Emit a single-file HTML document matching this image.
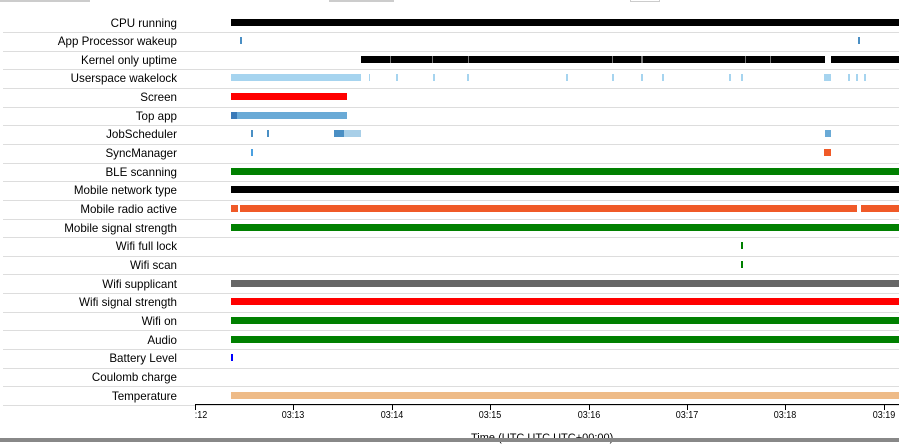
<!DOCTYPE html><html><head><style>
body{margin:0;width:899px;height:442px;overflow:hidden;background:#fff;font-family:"Liberation Sans",Arial,sans-serif;position:relative}
.l{position:absolute;right:722px;font-size:11.6px;color:#000;line-height:13px;white-space:nowrap}
.s{position:absolute;left:3px;width:896px;height:1px;background:#ddd}
.b{position:absolute;height:7px}
.t{position:absolute;font-size:10px;color:#000;transform:translateX(-50%) scaleX(0.9)}
.k{position:absolute;top:405px;width:1px;height:5px;background:#000}
</style></head><body>
<div style="position:absolute;left:0;top:0;width:90px;height:2px;background:#ccc"></div>
<div style="position:absolute;left:329px;top:0;width:65px;height:2px;background:#ccc"></div>
<div style="position:absolute;left:630px;top:0;width:30px;height:2px;border:1px solid #ccc;border-top:none;box-sizing:border-box"></div>
<div id="c"></div>
<script>
var labels=["CPU running","App Processor wakeup","Kernel only uptime","Userspace wakelock","Screen","Top app","JobScheduler","SyncManager","BLE scanning","Mobile network type","Mobile radio active","Mobile signal strength","Wifi full lock","Wifi scan","Wifi supplicant","Wifi signal strength","Wifi on","Audio","Battery Level","Coulomb charge","Temperature"];
var K="#000",LB="#a6d4ef",B="#4a8fc4",G="#008000",O="#f05a28";
var bars={0:[[231,899,K]],1:[[240,242,B],[858,860,B]],2:[[361,825,K],[831,899,K]],
3:[[231,361,LB],[369,370,LB],[396,398,LB],[433,435,LB],[467,469,LB],[566,568,LB],[612,614,LB],[641,643,LB],[662,664,LB],[729,731,LB],[741,743,LB],[824,831,LB],[848,850,LB],[856,858,LB],[864,866,LB]],
4:[[231,347,"#f00"]],5:[[231,347,"#6aaad6"],[231,237,"#3a7ab8"]],
6:[[251,253,B],[267,269,B],[334,361,"#a8cfe8"],[334,344,"#4a8fc4"],[825,831,"#6aaad6"]],
7:[[251,253,"#4aa0e0"],[824,831,O]],8:[[231,899,G]],9:[[231,899,K]],
10:[[231,238,O],[240,857,O],[861,899,O]],11:[[231,899,G]],12:[[741,743,G]],13:[[741,743,G]],
14:[[231,899,"#666"]],15:[[231,899,"#f00"]],16:[[231,899,G]],17:[[231,899,G]],18:[[231,233,"#00f"]],20:[[231,899,"#eebb88"]]};
var h="";
labels.forEach(function(t,i){var cy=22+i*18.65;
h+='<div class="l" style="top:'+(cy-5.5)+'px">'+t+'</div>';
h+='<div class="s" style="top:'+Math.round(cy+10)+'px"></div>';
(bars[i]||[]).forEach(function(b){h+='<div class="b" style="left:'+b[0]+'px;width:'+(b[1]-b[0])+'px;top:'+(cy-3.5)+'px;background:'+b[2]+'"></div>'});
});
[390,432,468,612,641,642,745,770].forEach(function(x){h+='<div class="b" style="left:'+x+'px;width:1px;top:'+(22+2*18.65-3.5)+'px;background:#777"></div>'});
h+='<div style="position:absolute;left:195px;top:404px;width:704px;height:1px;background:#000"></div>';
var tl=[":12","03:13","03:14","03:15","03:16","03:17","03:18","03:19"];
tl.forEach(function(t,i){var x=195+i*98.4;h+='<div class="k" style="left:'+Math.round(x)+'px"></div><div class="t" style="left:'+(i==0?x+6:x)+'px;top:410px">'+t+'</div>'});
h+='<div style="position:absolute;left:471px;top:432px;font-size:11px">Time (UTC UTC UTC+00:00)</div>';
h+='<div style="position:absolute;left:0;top:438px;width:899px;height:4px;background:#888"></div>';
document.getElementById("c").innerHTML=h;
</script>
</body></html>
